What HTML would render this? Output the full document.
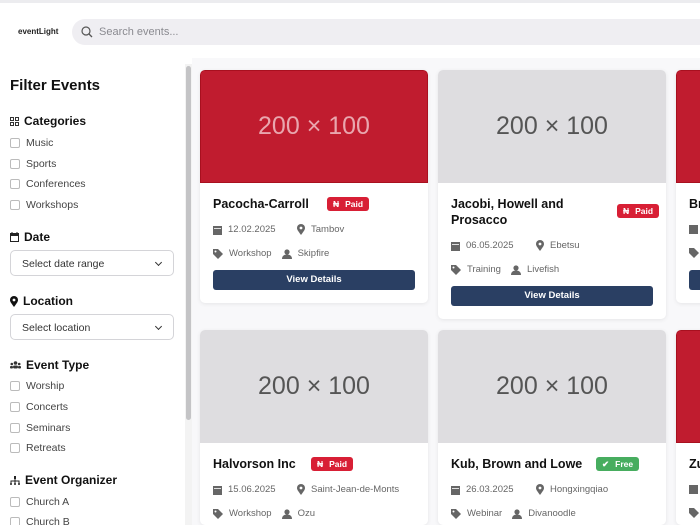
<!DOCTYPE html>
<html style="width:700px;height:525px;overflow:hidden"><head><meta charset="utf-8"><style>
*{box-sizing:border-box;margin:0;padding:0}
body{width:700px;height:525px;overflow:hidden;background:#fff;font-family:"Liberation Sans",Arial,sans-serif;position:relative;color:#111}
.topline{position:absolute;left:0;top:0;width:700px;height:3px;background:#ececef}
.logo{position:absolute;left:18px;top:27px;font-size:8px;font-weight:bold;color:#222}
.search{position:absolute;left:72px;top:19px;width:640px;height:26px;border-radius:13px;background:#efeef2}
.search span{position:absolute;left:27px;top:7px;font-size:11px;color:#8a8a90}
.search svg{position:absolute;left:9px;top:7px}
.sb{position:absolute;left:185px;top:64px;width:7px;height:461px;background:#f3f3f3}
.sb div{position:absolute;left:1px;top:2px;width:5px;height:354px;border-radius:3px;background:#c4c4c6}
.main{position:absolute;left:192px;top:58px;width:508px;height:467px;background:#f8f8fa}
h1{position:absolute;left:10px;top:77px;font-size:15px;font-weight:bold}
.h{position:absolute;left:10px;font-size:12px;font-weight:bold;display:flex;align-items:center;gap:5px}
.cb{position:absolute;left:10px;font-size:10.5px;color:#444;display:flex;align-items:center;gap:6px;line-height:12px}
.cb i{display:inline-block;width:10px;height:10px;border:1px solid #bbb;border-radius:2px}
.sel{position:absolute;left:10px;width:164px;height:26px;border:1px solid #d4d4d8;border-radius:5px;font-size:10.5px;color:#333;padding:7px 0 0 11px}
.sel:after{content:"";position:absolute;right:12px;top:9px;width:4px;height:4px;border-right:1.2px solid #333;border-bottom:1.2px solid #333;transform:rotate(45deg)}
.card{position:absolute;width:228px;background:#fff;border-radius:5px;box-shadow:0 1px 4px rgba(0,0,0,.08);overflow:hidden}
.img{height:113px;display:flex;align-items:center;justify-content:center;font-size:25px;color:#555;border-radius:4px 4px 0 0}
.red{background:#c01c2f;color:#e9a6ae;border:1.5px solid #a8101f}
.gray{background:#dedde0}
.title{position:absolute;left:13px;font-size:12.5px;font-weight:bold;line-height:16px;color:#111}
.badge{position:absolute;height:14px;border-radius:3px;color:#fff;font-size:8.5px;font-weight:bold;padding:2px 6px 0 6px;display:flex;gap:6px}
.paid{background:#d81f35}.free{background:#47ad5f}
.meta{position:absolute;left:13px;font-size:9.5px;color:#666;display:flex;align-items:center}
.meta svg{margin-right:6px}
.btn{position:absolute;left:13px;width:202px;height:20px;background:#2a3f63;border-radius:3px;color:#fff;font-size:9.5px;font-weight:bold;text-align:center;line-height:20px}
</style></head><body>
<div class="topline"></div>
<div class="logo">eventLight</div>
<div class="search"><svg width="12" height="12" viewBox="0 0 12 12"><circle cx="5" cy="5" r="4" fill="none" stroke="#555" stroke-width="1.2"/><path d="M8 8l3 3" stroke="#555" stroke-width="1.3"/></svg><span>Search events...</span></div>
<div class="main"></div>
<div class="sb"><div></div></div>
<h1>Filter Events</h1>
<div class="h" style="top:114px"><svg width="9" height="9" viewBox="0 0 9 9" fill="none" stroke="#333" stroke-width="1"><rect x=".5" y=".5" width="3" height="3"/><rect x="5.5" y=".5" width="3" height="3"/><rect x=".5" y="5.5" width="3" height="3"/><rect x="5.5" y="5.5" width="3" height="3"/></svg>Categories</div>
<div class="cb" style="top:137px"><i></i>Music</div>
<div class="cb" style="top:158px"><i></i>Sports</div>
<div class="cb" style="top:178px"><i></i>Conferences</div>
<div class="cb" style="top:199px"><i></i>Workshops</div>
<div class="h" style="top:230px"><svg width="9" height="10" viewBox="0 0 9 10"><rect x="0" y="1" width="9" height="9" fill="#222"/><rect x="1" y="4" width="7" height="5" fill="#fff"/><path d="M2 0v2M7 0v2" stroke="#222"/></svg>Date</div>
<div class="sel" style="top:250px">Select date range</div>
<div class="h" style="top:294px"><svg width="8" height="11" viewBox="0 0 8 11"><path d="M4 11C1 7 0 5.5 0 4a4 4 0 018 0c0 1.5-1 3-4 7z" fill="#111"/><circle cx="4" cy="4" r="1.4" fill="#fff"/></svg>Location</div>
<div class="sel" style="top:314px">Select location</div>
<div class="h" style="top:358px"><svg width="11" height="8" viewBox="0 0 11 8" fill="#333"><circle cx="5.5" cy="2" r="1.8"/><circle cx="1.8" cy="3" r="1.3"/><circle cx="9.2" cy="3" r="1.3"/><rect x="3" y="4.5" width="5" height="3" rx="1.5"/><rect x="0" y="5" width="3" height="2.5" rx="1"/><rect x="8" y="5" width="3" height="2.5" rx="1"/></svg>Event Type</div>
<div class="cb" style="top:380px"><i></i>Worship</div>
<div class="cb" style="top:401px"><i></i>Concerts</div>
<div class="cb" style="top:422px"><i></i>Seminars</div>
<div class="cb" style="top:442px"><i></i>Retreats</div>
<div class="h" style="top:473px"><svg width="10" height="9" viewBox="0 0 10 9" fill="#222"><rect x="4" y="0" width="2" height="3"/><path d="M1 8V5h8v3" stroke="#222" fill="none"/><rect x="4.5" y="3" width="1" height="5"/><circle cx="1" cy="8" r="1"/><circle cx="5" cy="8" r="1"/><circle cx="9" cy="8" r="1"/></svg>Event Organizer</div>
<div class="cb" style="top:496px"><i></i>Church A</div>
<div class="cb" style="top:516px"><i></i>Church B</div>

<div class="card" style="left:200px;top:70px;height:233px"><div class="img red">200 × 100</div>
<div class="title" style="top:126px">Pacocha-Carroll</div>
<div class="badge paid" style="left:127px;top:127px"><span>₦</span>Paid</div>
<div class="meta" style="top:154px"><span style="display:flex;align-items:center;width:84px"><svg width="9" height="10" viewBox="0 0 9 10"><rect y="1" width="9" height="9" fill="#666"/><rect x="1" y="3" width="7" height=".8" fill="#fff"/></svg>12.02.2025</span><svg width="8" height="11" viewBox="0 0 8 11"><path d="M4 11C1 7 0 5.5 0 4a4 4 0 018 0c0 1.5-1 3-4 7z" fill="#666"/><circle cx="4" cy="4" r="1.4" fill="#fff"/></svg>Tambov</div>
<div class="meta" style="top:178px"><svg width="10" height="10" viewBox="0 0 10 10"><path d="M0 0h5l5 5-5 5-5-5z" fill="#666"/><circle cx="2.5" cy="2.5" r="1" fill="#fff"/></svg>Workshop<svg style="margin-left:10px" width="10" height="10" viewBox="0 0 10 10" fill="#666"><circle cx="5" cy="3" r="2.6"/><path d="M0 10c0-3 2-4.5 5-4.5s5 1.5 5 4.5z"/></svg>Skipfire</div>
<div class="btn" style="top:200px">View Details</div></div>

<div class="card" style="left:438px;top:70px;height:249px"><div class="img gray">200 × 100</div>
<div class="title" style="top:126px">Jacobi, Howell and<br>Prosacco</div>
<div class="badge paid" style="left:179px;top:134px"><span>₦</span>Paid</div>
<div class="meta" style="top:170px"><span style="display:flex;align-items:center;width:85px"><svg width="9" height="10" viewBox="0 0 9 10"><rect y="1" width="9" height="9" fill="#666"/><rect x="1" y="3" width="7" height=".8" fill="#fff"/></svg>06.05.2025</span><svg width="8" height="11" viewBox="0 0 8 11"><path d="M4 11C1 7 0 5.5 0 4a4 4 0 018 0c0 1.5-1 3-4 7z" fill="#666"/><circle cx="4" cy="4" r="1.4" fill="#fff"/></svg>Ebetsu</div>
<div class="meta" style="top:194px"><svg width="10" height="10" viewBox="0 0 10 10"><path d="M0 0h5l5 5-5 5-5-5z" fill="#666"/><circle cx="2.5" cy="2.5" r="1" fill="#fff"/></svg>Training<svg style="margin-left:10px" width="10" height="10" viewBox="0 0 10 10" fill="#666"><circle cx="5" cy="3" r="2.6"/><path d="M0 10c0-3 2-4.5 5-4.5s5 1.5 5 4.5z"/></svg>Livefish</div>
<div class="btn" style="top:216px">View Details</div></div>

<div class="card" style="left:676px;top:70px;height:233px"><div class="img red"></div>
<div class="title" style="top:126px">Br</div>
<div class="meta" style="top:154px"><svg width="9" height="10" viewBox="0 0 9 10"><rect y="1" width="9" height="9" fill="#666"/></svg></div>
<div class="meta" style="top:178px"><svg width="10" height="10" viewBox="0 0 10 10"><path d="M0 0h5l5 5-5 5-5-5z" fill="#666"/></svg></div>
<div class="btn" style="top:200px"></div></div>

<div class="card" style="left:200px;top:330px;height:195px"><div class="img gray">200 × 100</div>
<div class="title" style="top:126px">Halvorson Inc</div>
<div class="badge paid" style="left:111px;top:127px"><span>₦</span>Paid</div>
<div class="meta" style="top:154px"><span style="display:flex;align-items:center;width:84px"><svg width="9" height="10" viewBox="0 0 9 10"><rect y="1" width="9" height="9" fill="#666"/><rect x="1" y="3" width="7" height=".8" fill="#fff"/></svg>15.06.2025</span><svg width="8" height="11" viewBox="0 0 8 11"><path d="M4 11C1 7 0 5.5 0 4a4 4 0 018 0c0 1.5-1 3-4 7z" fill="#666"/><circle cx="4" cy="4" r="1.4" fill="#fff"/></svg>Saint-Jean-de-Monts</div>
<div class="meta" style="top:178px"><svg width="10" height="10" viewBox="0 0 10 10"><path d="M0 0h5l5 5-5 5-5-5z" fill="#666"/><circle cx="2.5" cy="2.5" r="1" fill="#fff"/></svg>Workshop<svg style="margin-left:10px" width="10" height="10" viewBox="0 0 10 10" fill="#666"><circle cx="5" cy="3" r="2.6"/><path d="M0 10c0-3 2-4.5 5-4.5s5 1.5 5 4.5z"/></svg>Ozu</div></div>

<div class="card" style="left:438px;top:330px;height:195px"><div class="img gray">200 × 100</div>
<div class="title" style="top:126px">Kub, Brown and Lowe</div>
<div class="badge free" style="left:158px;top:127px"><span>✔</span>Free</div>
<div class="meta" style="top:154px"><span style="display:flex;align-items:center;width:85px"><svg width="9" height="10" viewBox="0 0 9 10"><rect y="1" width="9" height="9" fill="#666"/><rect x="1" y="3" width="7" height=".8" fill="#fff"/></svg>26.03.2025</span><svg width="8" height="11" viewBox="0 0 8 11"><path d="M4 11C1 7 0 5.5 0 4a4 4 0 018 0c0 1.5-1 3-4 7z" fill="#666"/><circle cx="4" cy="4" r="1.4" fill="#fff"/></svg>Hongxingqiao</div>
<div class="meta" style="top:178px"><svg width="10" height="10" viewBox="0 0 10 10"><path d="M0 0h5l5 5-5 5-5-5z" fill="#666"/><circle cx="2.5" cy="2.5" r="1" fill="#fff"/></svg>Webinar<svg style="margin-left:10px" width="10" height="10" viewBox="0 0 10 10" fill="#666"><circle cx="5" cy="3" r="2.6"/><path d="M0 10c0-3 2-4.5 5-4.5s5 1.5 5 4.5z"/></svg>Divanoodle</div></div>

<div class="card" style="left:676px;top:330px;height:195px"><div class="img red"></div>
<div class="title" style="top:126px">Zu</div>
<div class="meta" style="top:154px"><svg width="9" height="10" viewBox="0 0 9 10"><rect y="1" width="9" height="9" fill="#666"/></svg></div>
<div class="meta" style="top:178px"><svg width="10" height="10" viewBox="0 0 10 10"><path d="M0 0h5l5 5-5 5-5-5z" fill="#666"/></svg></div></div>
</body></html>
